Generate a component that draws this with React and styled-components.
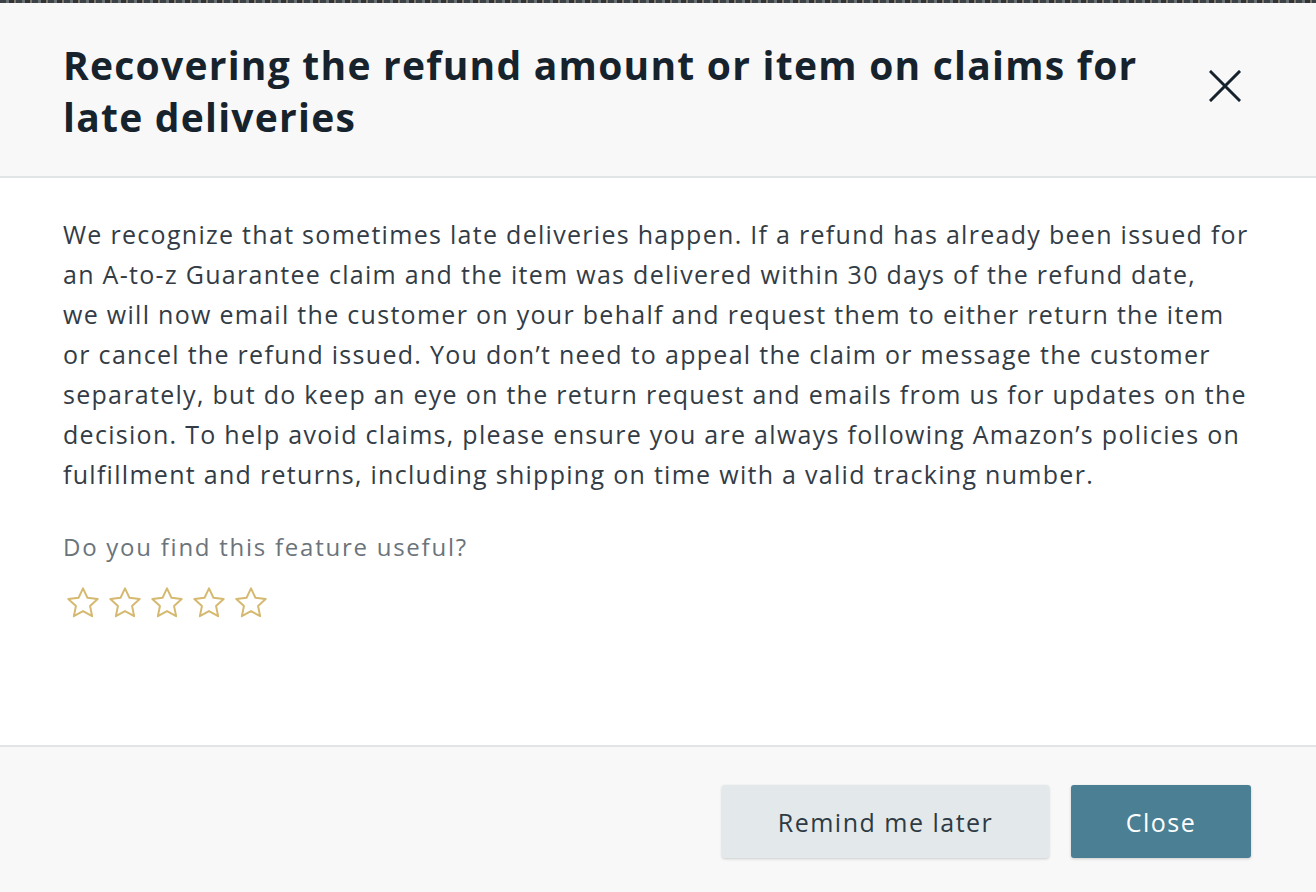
import React from "react";
import styled, { createGlobalStyle } from "styled-components";

const Global = createGlobalStyle`
  html, body { margin: 0; padding: 0; }
  body { font-family: "Open Sans", "Noto Sans", sans-serif; background: #f8f8f8; }
  #root { height: 892px; }
`;

const Page = styled.div`
  height: 892px;
  display: flex;
  flex-direction: column;
  overflow: hidden;
`;

const TopStrip = styled.div`
  height: 3px;
  background: repeating-linear-gradient(90deg, #3d4246 0 6px, #6b6f72 6px 9px, #2f3438 9px 14px, #80766a 14px 16px);
`;

const Header = styled.header`
  height: 175px;
  box-sizing: border-box;
  background: #f8f8f8;
  border-bottom: 2px solid #e1e5e5;
  display: flex;
  align-items: flex-start;
  justify-content: space-between;
  padding: 36px 75px 0 63px;
`;

const Title = styled.h1`
  margin: 0;
  font-size: 39px;
  line-height: 52px;
  font-weight: 700;
  letter-spacing: 1.25px;
  color: #16232d;
  max-width: 1110px;
`;

const CloseIcon = styled.button`
  border: 0;
  background: none;
  padding: 0;
  margin-top: 31px;
  width: 32px;
  height: 32px;
  display: flex;
  align-items: center;
  justify-content: center;
  cursor: pointer;
`;

const Body = styled.main`
  flex: 1;
  background: #ffffff;
  padding: 36px 63px 0 63px;
  border-bottom: 2px solid #e1e5e5;
`;

const Paragraph = styled.p`
  margin: 0;
  font-size: 25px;
  line-height: 40px;
  letter-spacing: 1.29px;
  color: #333c45;
`;

const Line = styled.span`
  display: block;
  white-space: nowrap;
`;

const Question = styled.p`
  margin: 33px 0 0 0;
  font-size: 24px;
  line-height: 40px;
  letter-spacing: 1.75px;
  color: #6b747b;
`;

const Stars = styled.div`
  display: flex;
  gap: 6px;
  margin-top: 18px;
  margin-left: 2px;
`;

const Footer = styled.footer`
  height: 145px;
  box-sizing: border-box;
  background: #f8f8f8;
  display: flex;
  justify-content: flex-end;
  align-items: flex-start;
  gap: 22px;
  padding: 38px 65px 0 0;
`;

const Button = styled.button`
  height: 73px;
  border: 0;
  border-radius: 3px;
  font-family: "Open Sans", "Noto Sans", sans-serif;
  font-size: 25px;
  letter-spacing: 1.5px;
  padding: 0;
  width: ${(p) => p.$w}px;
  background: ${(p) => (p.$primary ? "#4b7f94" : "#e3e8eb")};
  color: ${(p) => (p.$primary ? "#ffffff" : "#2e3a44")};
  box-shadow: 0 1px 3px rgba(0, 0, 0, 0.18);
  cursor: pointer;
`;

const Star = () => (
  <svg width="36" height="36" viewBox="0 0 24 24" fill="none" stroke="#d6b970" strokeWidth="1.3" strokeLinejoin="round">
    <path d="M12 2.2l2.95 6.3 6.85.8-5.1 4.7 1.4 6.8L12 17.4l-6.1 3.4 1.4-6.8-5.1-4.7 6.85-.8z" />
  </svg>
);

const lines = [
  "We recognize that sometimes late deliveries happen. If a refund has already been issued for",
  "an A-to-z Guarantee claim and the item was delivered within 30 days of the refund date,",
  "we will now email the customer on your behalf and request them to either return the item",
  "or cancel the refund issued. You don’t need to appeal the claim or message the customer",
  "separately, but do keep an eye on the return request and emails from us for updates on the",
  "decision. To help avoid claims, please ensure you are always following Amazon’s policies on",
  "fulfillment and returns, including shipping on time with a valid tracking number.",
];

export default function App() {
  return (
    <Page>
      <Global />
      <TopStrip />
      <Header>
        <Title>Recovering the refund amount or item on claims for late deliveries</Title>
        <CloseIcon aria-label="Close">
          <svg width="32" height="32" viewBox="0 0 32 32">
            <path d="M2 2L30 30M30 2L2 30" stroke="#16232d" strokeWidth="3" strokeLinecap="square" />
          </svg>
        </CloseIcon>
      </Header>
      <Body>
        <Paragraph>
          {lines.map((l, i) => (
            <Line key={i}>{l}</Line>
          ))}
        </Paragraph>
        <Question>Do you find this feature useful?</Question>
        <Stars>
          {[0, 1, 2, 3, 4].map((i) => (
            <Star key={i} />
          ))}
        </Stars>
      </Body>
      <Footer>
        <Button $w={327}>Remind me later</Button>
        <Button $primary $w={180}>Close</Button>
      </Footer>
    </Page>
  );
}
